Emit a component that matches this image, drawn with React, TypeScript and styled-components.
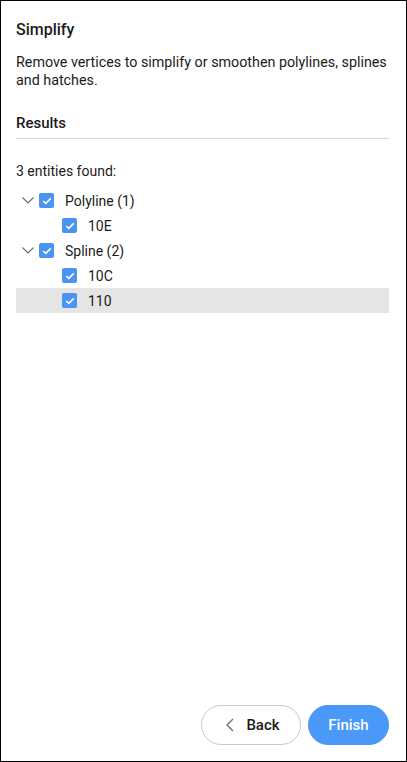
import React from 'react'
import styled, { createGlobalStyle } from 'styled-components'

const GlobalStyle = createGlobalStyle`
  html, body {
    margin: 0;
    padding: 0;
    background: #ffffff;
  }
  * {
    box-sizing: border-box;
  }
`

interface Entity {
  label: string
  children?: string[]
}

const entities: Entity[] = [
  { label: 'Polyline (1)', children: ['10E'] },
  { label: 'Spline (2)', children: ['10C', '110'] },
]

const Panel = styled('div')`
  display: flex;
  flex-direction: column;
  width: 407px;
  height: 762px;
  border: 1px solid #000000;
  padding: 18px 17px 16px 15px;
  font-family: Roboto, 'Liberation Sans', sans-serif;
  color: #1b1b1b;
  background: #ffffff;
`

const Title = styled('h1')`
  margin: 0;
  font-size: 16px;
  font-weight: 500;
  line-height: 22px;
`

const Description = styled('p')`
  margin: 12px 0 0;
  font-size: 14.3px;
  line-height: 18px;
`

const SectionTitle = styled('h2')`
  margin: 24px 0 0;
  padding-bottom: 5px;
  font-size: 15px;
  font-weight: 500;
  line-height: 20px;
  border-bottom: 1px solid #d6d6d6;
`

const Summary = styled('div')`
  margin-top: 22px;
  font-size: 14px;
  line-height: 20px;
`

const Tree = styled('div')`
  display: flex;
  flex-direction: column;
  margin-top: 7px;
`

const Row = styled('div')<{ $level: number; $selected?: boolean }>`
  display: flex;
  align-items: center;
  height: 25px;
  padding-left: ${({ $level }) => $level * 23}px;
  background: ${({ $selected }) => ($selected ? '#e5e5e5' : 'transparent')};
  font-size: 14px;
`

const Toggle = styled('span')`
  display: flex;
  align-items: center;
  justify-content: center;
  width: 23px;
  height: 25px;
  color: #6b6b6b;
`

const Check = styled('span')`
  display: flex;
  align-items: center;
  justify-content: center;
  width: 15px;
  height: 15px;
  border-radius: 2px;
  background: #4a94f2;
  margin-right: 11px;
`

const Footer = styled('div')`
  display: flex;
  justify-content: flex-end;
  gap: 7px;
  margin-top: auto;
`

const Button = styled('button')<{ $primary?: boolean }>`
  display: flex;
  align-items: center;
  justify-content: center;
  gap: 12px;
  height: 40px;
  border-radius: 20px;
  font-family: Roboto, 'Liberation Sans', sans-serif;
  font-size: 15px;
  font-weight: 500;
  cursor: pointer;
  border: 1px solid ${({ $primary }) => ($primary ? '#4a98f7' : '#c9c9c9')};
  background: ${({ $primary }) => ($primary ? '#4a98f7' : '#ffffff')};
  color: ${({ $primary }) => ($primary ? '#ffffff' : '#1b1b1b')};
  width: ${({ $primary }) => ($primary ? '81px' : '100px')};
  padding: 0 0 0 ${({ $primary }) => ($primary ? '0' : '4px')};
`

const Chevron = () => (
  <svg width="12" height="7" viewBox="0 0 12 7" fill="none">
    <path d="M0.5 0.5 L6 6 L11.5 0.5" stroke="currentColor" strokeWidth="1.1" />
  </svg>
)

const Tick = () => (
  <svg width="10" height="8" viewBox="0 0 10 8" fill="none">
    <path d="M1.2 4 L3.8 6.4 L8.8 1.4" stroke="#ffffff" strokeWidth="1.6" />
  </svg>
)

const BackArrow = () => (
  <svg width="8" height="14" viewBox="0 0 8 14" fill="none">
    <path d="M7 1 L1 7 L7 13" stroke="#6b6b6b" strokeWidth="1.3" />
  </svg>
)

export default function App() {
  return (
    <Panel>
      <GlobalStyle />
      <Title>Simplify</Title>
      <Description>
        Remove vertices to simplify or smoothen polylines, splines and hatches.
      </Description>
      <SectionTitle>Results</SectionTitle>
      <Summary>3 entities found:</Summary>
      <Tree>
        {entities.map((entity) => (
          <React.Fragment key={entity.label}>
            <Row $level={0}>
              <Toggle>
                <Chevron />
              </Toggle>
              <Check>
                <Tick />
              </Check>
              {entity.label}
            </Row>
            {entity.children?.map((child) => (
              <Row key={child} $level={1} $selected={child === '110'}>
                <Toggle />
                <Check>
                  <Tick />
                </Check>
                {child}
              </Row>
            ))}
          </React.Fragment>
        ))}
      </Tree>
      <Footer>
        <Button>
          <BackArrow />
          Back
        </Button>
        <Button $primary>Finish</Button>
      </Footer>
    </Panel>
  )
}
